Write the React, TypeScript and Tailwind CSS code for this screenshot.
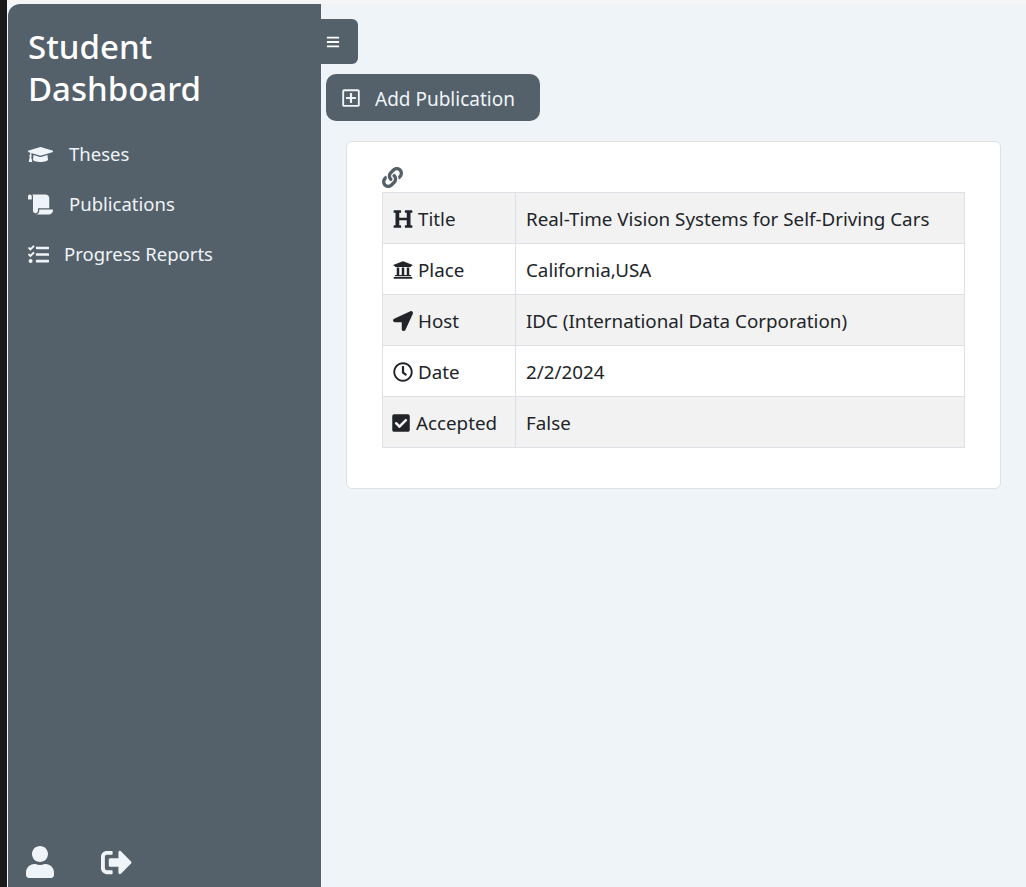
import type { ReactNode } from 'react'
import {
  FaBars,
  FaCheckSquare,
  FaGraduationCap,
  FaHeading,
  FaLink,
  FaLocationArrow,
  FaRegClock,
  FaRegPlusSquare,
  FaScroll,
  FaSignOutAlt,
  FaTasks,
  FaUniversity,
  FaUser,
} from 'react-icons/fa'

const rows: { icon: ReactNode; label: string; value: string; shaded: boolean }[] = [
  { icon: <FaHeading size={20} />, label: 'Title', value: 'Real-Time Vision Systems for Self-Driving Cars', shaded: true },
  { icon: <FaUniversity size={20} />, label: 'Place', value: 'California,USA', shaded: false },
  { icon: <FaLocationArrow size={20} />, label: 'Host', value: 'IDC (International Data Corporation)', shaded: true },
  { icon: <FaRegClock size={20} />, label: 'Date', value: '2/2/2024', shaded: false },
  { icon: <FaCheckSquare size={20} className="-ml-[2px]" />, label: 'Accepted', value: 'False', shaded: true },
]

export default function App() {
  return (
    <div className="flex h-[887px] w-[1026px] overflow-hidden bg-[#eff4f8] font-['Noto_Sans',sans-serif] text-[#212529]">
      <div className="w-[7px] shrink-0 bg-[#1b1b1b]" />
      <div className="flex min-w-0 flex-1 flex-col bg-[#f6f6f6]">
        <div className="h-[4px] shrink-0 bg-[#f6f6f6]" />
        <div className="flex min-h-0 flex-1">
          <aside className="ml-px flex w-[313px] shrink-0 flex-col rounded-tl-[12px] bg-[#54606a] pl-5 text-[#eff4f8]">
            <h1 className="pt-[22px] text-[33px] font-medium leading-[42px] text-white">
              Student
              <br />
              Dashboard
            </h1>
            <nav className="mt-[19px] flex flex-col text-[18.5px] leading-[26px]">
              <a className="flex h-[50px] items-center gap-[16px]">
                <FaGraduationCap size={25} />
                <span>Theses</span>
              </a>
              <a className="flex h-[50px] items-center gap-[16px]">
                <FaScroll size={25} />
                <span>Publications</span>
              </a>
              <a className="flex h-[50px] items-center gap-[15px]">
                <FaTasks size={21} />
                <span>Progress Reports</span>
              </a>
            </nav>
            <div className="-ml-[4px] mt-auto flex items-center gap-[45px] pb-[9px]">
              <FaUser size={32} />
              <FaSignOutAlt size={31} />
            </div>
          </aside>
          <main className="min-w-0 flex-1 bg-[#eff4f8]">
            <button
              type="button"
              className="mt-[15px] flex h-[45px] w-[37px] items-center justify-start rounded-r-[6px] bg-[#54606a] pl-[5px] text-white"
            >
              <FaBars size={14} />
            </button>
            <button
              type="button"
              className="ml-[5px] mt-[10px] flex h-[47px] w-[214px] items-center gap-[14px] rounded-[10px] bg-[#54606a] pl-[15px] text-[19px] text-[#eff4f8]"
            >
              <FaRegPlusSquare size={20} />
              <span className="pt-[4px]">Add Publication</span>
            </button>
            <section className="ml-[25px] mt-[20px] h-[348px] w-[655px] rounded-[6px] border border-[#dfe0e3] bg-white pl-[35px] pt-[25px]">
              <FaLink size={21} className="text-[#54606a]" />
              <table className="mt-[4px] w-[583px] border-collapse text-[18.8px]">
                <tbody>
                  {rows.map((row) => (
                    <tr key={row.label} className={row.shaded ? 'bg-[#f2f2f2]' : 'bg-white'}>
                      <td className="h-[51px] w-[133px] border border-[#dee2e6] pl-[10px] pt-[2px]">
                        <div className="flex items-center gap-[5px]">
                          {row.icon}
                          <span>{row.label}</span>
                        </div>
                      </td>
                      <td className="h-[51px] border border-[#dee2e6] pl-[10px] pt-[2px]">{row.value}</td>
                    </tr>
                  ))}
                </tbody>
              </table>
            </section>
          </main>
        </div>
      </div>
    </div>
  )
}
